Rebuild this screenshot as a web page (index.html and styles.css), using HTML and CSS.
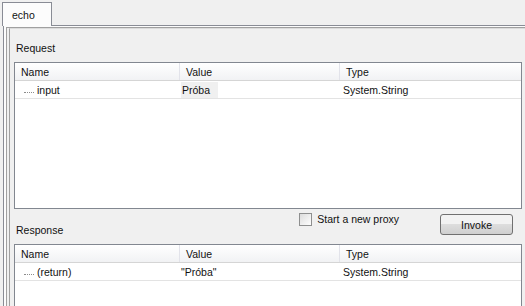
FILE: index.html
```html
<!DOCTYPE html>
<html lang="en">
<head>
    <meta charset="UTF-8">
    <title>echo</title>
    <link rel="stylesheet" href="styles.css">
</head>
<body>
    <div class="tabs">
        <div class="tab">echo</div>
    </div>
    <div class="page">
        <div class="page-inner">
            <div class="panel">
                <div class="section-title">Request</div>
                <div class="grid request">
                    <div class="row head">
                        <div class="cell name">Name</div>
                        <div class="cell value">Value</div>
                        <div class="cell type">Type</div>
                    </div>
                    <div class="row">
                        <div class="cell name"><span class="dots"></span>input</div>
                        <div class="cell value"><span class="edit">Próba</span></div>
                        <div class="cell type">System.String</div>
                    </div>
                </div>
                <div class="actions">
                    <div class="section-title bottom">Response</div>
                    <label class="proxy"><span class="check"></span>Start a new proxy</label>
                    <button class="invoke">Invoke</button>
                </div>
                <div class="grid response">
                    <div class="row head">
                        <div class="cell name">Name</div>
                        <div class="cell value">Value</div>
                        <div class="cell type">Type</div>
                    </div>
                    <div class="row">
                        <div class="cell name"><span class="dots"></span>(return)</div>
                        <div class="cell value">"Próba"</div>
                        <div class="cell type">System.String</div>
                    </div>
                </div>
            </div>
        </div>
    </div>
</body>
</html>
```
FILE: styles.css
```css
body {
    margin: 0;
    padding: 2px 0 0 2px;
    width: 525px;
    height: 306px;
    box-sizing: border-box;
    overflow: hidden;
    background-color: #f0f0f0;
    font-family: 'Liberation Sans', Arial, sans-serif;
    font-size: 10.5px;
    color: #111;
}
.tabs {
    display: flex;
    height: 23px;
}
.tab {
    width: 50px;
    height: 24px;
    box-sizing: border-box;
    border: 1px solid #898c95;
    border-bottom: none;
    background-color: #fcfcfc;
    padding: 6px 0 0 9px;
    position: relative;
    z-index: 1;
}
.page {
    margin-left: 1px;
    border-top: 1px solid #898c95;
    border-left: 1px solid #898c95;
    padding: 1px 0 0 2px;
    background-color: #fcfcfc;
}
.page-inner {
    border-top: 1px solid #a0a0a0;
    border-left: 1px solid #a0a0a0;
    padding: 0 0 0 2px;
    background-color: #f0f0f0;
}
.panel {
    border-left: 1px solid #a0a0a0;
    border-top: 1px solid #dcdcdc;
    padding-left: 4px;
}
.section-title {
    height: 33px;
    box-sizing: border-box;
    padding: 13px 0 0 2px;
}
.grid {
    width: 508px;
    box-sizing: border-box;
    border: 1px solid #828790;
    background-color: #fff;
}
.grid.request {
    height: 147px;
}
.grid.response {
    height: 62px;
    border-bottom: none;
}
.row {
    display: flex;
    height: 18px;
    box-sizing: border-box;
    border-bottom: 1px solid #e3e3e3;
}
.row.head {
    background: linear-gradient(#ffffff, #f1f2f4);
    border-bottom: 1px solid #d5d5d5;
}
.cell {
    display: flex;
    align-items: center;
    box-sizing: border-box;
    padding-left: 6px;
}
.head .cell + .cell {
    border-left: 1px solid #e2e3ea;
}
.name {
    width: 164px;
}
.value {
    width: 160px;
}
.head .value {
    padding-left: 6px;
}
.type {
    flex: 1;
    padding-left: 4px;
}
.head .type {
    padding-left: 6px;
}
.row:not(.head) .value {
    padding-left: 2px;
}
.dots {
    width: 10px;
    margin: 5px 3px 0 3px;
    border-bottom: 1px dotted #8c8c8c;
}
.edit {
    background-color: #f0f0f0;
    height: 16px;
    line-height: 16px;
    width: 36px;
    padding-left: 1px;
}
.actions {
    display: flex;
    width: 508px;
    height: 35px;
}
.section-title.bottom {
    height: auto;
    padding: 15px 0 0 2px;
}
.proxy {
    display: flex;
    align-items: center;
    gap: 5px;
    height: 14px;
    margin: 3px 0 0 auto;
}
.check {
    width: 13px;
    height: 13px;
    box-sizing: border-box;
    border: 1px solid #8e8f8f;
    background: linear-gradient(135deg, #dcdcdc, #fefefe);
}
.invoke {
    width: 73px;
    height: 21px;
    margin: 5px 9px 0 41px;
    border: 1px solid #707070;
    border-radius: 3px;
    background: linear-gradient(#f2f2f2 50%, #dddddd 50%, #cfcfcf);
    font-family: 'Liberation Sans', Arial, sans-serif;
    font-size: 10.5px;
    color: #111;
    padding: 0;
}
```
